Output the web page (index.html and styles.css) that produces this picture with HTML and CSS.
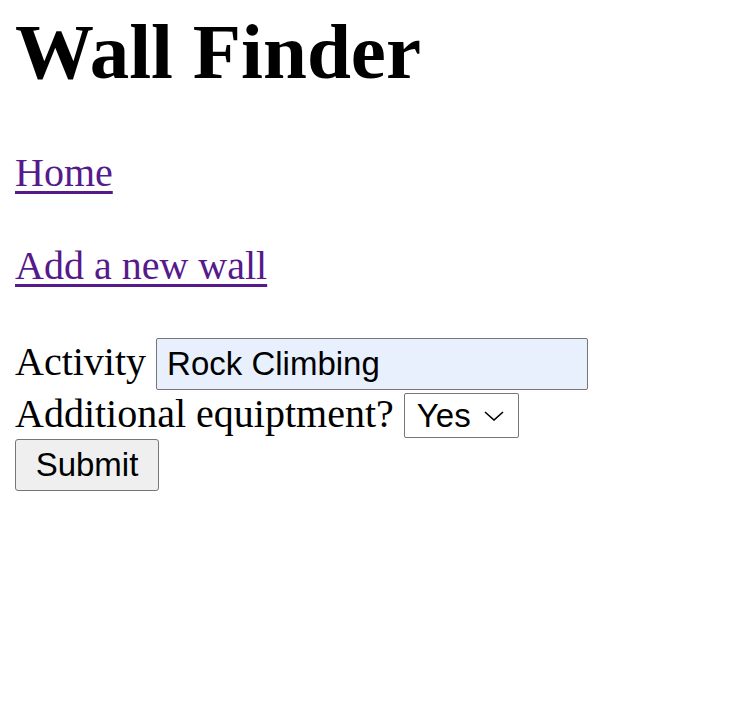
FILE: index.html
```html
<!DOCTYPE html>
<html>
<head>
<meta charset="utf-8">
<title>Wall Finder</title>
<link rel="stylesheet" href="styles.css">
</head>
<body>
<h1 class="title">Wall Finder</h1>
<p class="nav"><a href="#">Home</a></p>
<p class="nav"><a href="#">Add a new wall</a></p>
<form class="form">
  <div class="row row-activity">
    <label class="label" for="activity">Activity</label>
    <input class="text-input" id="activity" type="text" value="Rock Climbing">
  </div>
  <div class="row row-equip">
    <label class="label" for="equip">Additional equiptment?</label>
    <div class="select-wrap">
      <select class="select" id="equip"><option>Yes</option><option>No</option></select>
      <svg class="chevron" width="20" height="10" viewBox="0 0 20 10"><path d="M1 1 L10 9 L19 1" fill="none" stroke="#000" stroke-width="1.6"/></svg>
    </div>
  </div>
  <div class="row row-submit">
    <button class="submit" type="submit">Submit</button>
  </div>
</form>
</body>
</html>
```
FILE: styles.css
```css
html, body {
  margin: 0;
  background: #fff;
}
body {
  padding: 12px 15px 0 15px;
  font-family: "Liberation Serif", "Times New Roman", serif;
  font-size: 40px;
  color: #000;
}
.title {
  margin: 0 0 59px 0;
  font-size: 79px;
  line-height: 79px;
  font-weight: bold;
}
.nav {
  margin: 0 0 47px 0;
  line-height: 46px;
}
.nav a {
  color: #551a8b;
  text-decoration: underline;
  text-decoration-thickness: 3px;
  text-underline-offset: 5px;
}
.form {
  margin: 0;
  padding-top: 2px;
}
.row {
  display: flex;
  align-items: baseline;
  gap: 10px;
}
.label {
  line-height: 46px;
}
.text-input {
  box-sizing: border-box;
  width: 432px;
  height: 52px;
  padding: 0 10px;
  margin: 0;
  border: 1px solid #767676;
  border-radius: 2px;
  background: #e8f0fe;
  font-family: "Liberation Sans", Arial, sans-serif;
  font-size: 33px;
  color: #000;
}
.row-equip {
  padding-top: 1px;
  gap: 10px;
}
.select-wrap {
  position: relative;
  display: flex;
}
.select {
  -webkit-appearance: none;
  appearance: none;
  box-sizing: border-box;
  width: 115px;
  height: 45px;
  padding: 0 0 0 12px;
  margin: 0;
  border: 1px solid #767676;
  border-radius: 2px;
  background: #fff;
  font-family: "Liberation Sans", Arial, sans-serif;
  font-size: 33px;
  color: #000;
}
.chevron {
  position: absolute;
  left: 80px;
  top: 18px;
  pointer-events: none;
}
.row-submit {
  margin-top: 1px;
}
.submit {
  box-sizing: border-box;
  width: 144px;
  height: 52px;
  padding: 0;
  margin: 0;
  border: 1px solid #767676;
  border-radius: 3px;
  background: #efefef;
  font-family: "Liberation Sans", Arial, sans-serif;
  font-size: 33px;
  color: #000;
}
```
